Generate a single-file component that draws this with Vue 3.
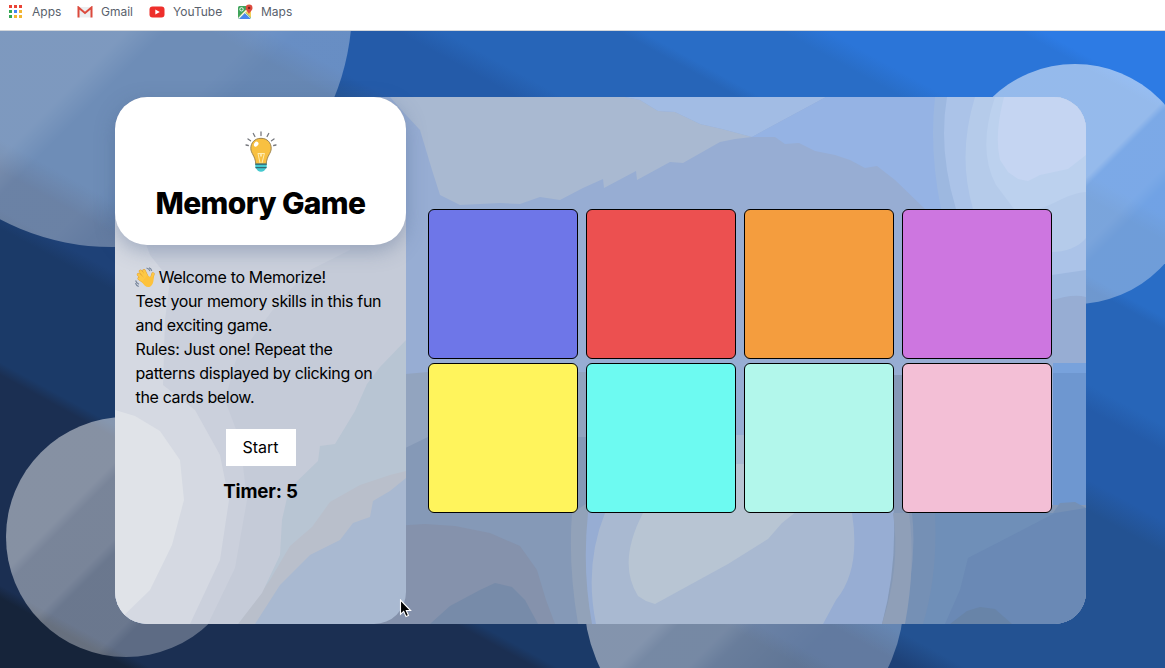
<script setup>
import { ref } from 'vue'

const timer = ref(5)
const cards = ['indigo', 'red', 'orange', 'orchid', 'yellow', 'cyan', 'mint', 'pink']
const dots = ['#ea4335', '#ea4335', '#ea4335', '#34a853', '#4285f4', '#f2b632', '#34a853', '#f2b632', '#f2b632']

// Tonal bands of the frosted panel, painted back to front.
const glassBands = [
  ['#97add3', 'M115 97H1086V624H115z'],
  ['#a9b9d1', 'M390 97H625L640 100 658 111 675 112 700 124 722 129 752 137 735 139 720 142 683 163 670 162 637 180 636 171 604 188 603 179 583 188 560 200 540 197 520 204 500 203 460 205 440 195 432 170 420 130 406 115z'],
  ['#a2bce4', 'M625 97H826L752 137 722 129 700 124 675 112 658 111 640 100z'],
  ['#95b3e4', 'M826 97H960V230H935L925 209 895 180 877 166 865 168 850 160 835 155 815 151 799 143 785 144 775 137 752 137z'],
  ['#9db8e0', 'M935 97Q929 150 941 209L945 300H1052C1064 297 1075 294 1086 297V97z'],
  ['#abc3e8', 'M947 97Q938 150 956 209L960 275H1052L1086 270V97z'],
  ['#b5cbea', 'M975 97Q957 155 973 209L980 252H1052C1064 252 1078 248 1086 238V97z'],
  ['#bcd1ee', 'M995 97Q977 150 996 185L1014 209H1038C1056 204 1068 193 1086 192V97z'],
  ['#c5d5f2', 'M1004 97Q994 135 1000 160L1008 172 1018 179 1028 181 1040 175 1068 169 1086 155V97z'],
  ['#6e97d0', 'M1053 373H1086V515H1053z'],
  ['#78a2dc', 'M1053 363H1086V373H1053z'],
  ['#92a4bf', 'M360 378L428 372H590V520H360z'],
  ['#8599b7', 'M360 470L428 437H590V630H360z'],
  ['#8592ac', 'M360 528L425 524 455 526 490 533 520 546 537 570 546 600 555 624H360z'],
  ['#778ba9', 'M430 624L450 606 480 590 495 583 512 587 525 600 538 624z'],
  ['#8599b7', 'M894 375H902V513H894zM890 505H1053L1086 505V624H880z'],
  ['#7590b5', 'M912 513H1053L1060 503 1075 502 1086 508V624H900Q918 565 912 513z'],
  ['#6a89b5', 'M965 513L1055 513 1086 508V624H930Q948 590 953 555z'],
  ['#6f8fb8', 'M935 513H1055L968 558 960 590 945 624H923Q938 575 935 513z'],
  ['#6884a8', 'M950 624L967 611 980 607 995 609 1012 624z'],
  ['#92a2b9', 'M572 513Q568 565 578 624H592V500z'],
  ['#97add3', 'M588 513Q582 570 592 624H882Q898 565 893 500H590z'],
  ['#8f9fb8', 'M893 513Q901 565 882 624H905Q916 565 909 513z'],
  ['#a9b9d1', 'M605 435H820L852 513Q861 570 836 600L823 624H596Q584 565 605 513z'],
  ['#b8c5d3', 'M643 513Q617 563 638 596L646 601 655 604 728 564 768 539 782 523 797 511V464H650z'],
]

// Tonal bands of the lighter side panel, from its lower right corner to its left edge.
const sideBands = [
  ['#a9b9d1', 'M115 97H406V624H115z'],
  ['#b9bfcb', 'M406 478L390 491 373 501 370 517 353 523 340 540 310 555 280 585 255 624H115V97H406z'],
  ['#b8c5d3', 'M406 471L390 475 360 485 330 502 312 527 290 546 270 580 238 624H115V97H406z'],
  ['#c5cbd8', 'M406 340L380 367 367 384 355 411 335 444 320 446 318 461 289 489 282 520 280 555 262 593 238 624H115V97H406z'],
  ['#cbd0dc', 'M208 624L235 568 247 500 240 440 225 400 236 360 280 300 310 270 350 250V97H115V624z'],
  ['#d5d9e2', 'M190 624L220 560 229 500 220 455 195 410 163 385 165 320 170 280 150 255 130 200H115V624z'],
  ['#e0e3e8', 'M115 624L150 590 172 545 184 500 180 460 160 431 135 416 115 410z'],
]
</script>

<template>
  <div class="page">
    <nav class="bookmarks">
      <a class="bookmark apps">
        <svg width="13" height="13" viewBox="0 0 13 13">
          <rect v-for="(c, i) in dots" :key="i" :x="(i % 3) * 5" :y="Math.floor(i / 3) * 5" width="3" height="3" :fill="c" />
        </svg>
        <span>Apps</span>
      </a>
      <a class="bookmark gmail">
        <svg width="16" height="12" viewBox="0 0 16 12">
          <path d="M1.5 1h13v10.5h-13z" fill="#eceef0" />
          <path d="M1.5 11.5V1.5L8 7l6.500-5.500V11.500" fill="none" stroke="#dc4a3d" stroke-width="2" />
        </svg>
        <span>Gmail</span>
      </a>
      <a class="bookmark youtube">
        <svg width="16" height="12" viewBox="0 0 16 12">
          <rect x=".5" y=".5" width="15" height="11" rx="3" fill="#ee2f2b" />
          <path d="M6.300 3.500v5L10.800 6z" fill="#fff" />
        </svg>
        <span>YouTube</span>
      </a>
      <a class="bookmark maps">
        <svg width="16" height="16" viewBox="0 0 16 16">
          <rect x="0" y="2" width="13" height="13" rx="1.500" fill="#3fa45b" />
          <path d="M0 13.500 11.500 2H13v11.500L7 8z" fill="#f5cf58" />
          <path d="M1 15 7 9l5.800 6z" fill="#4a86ee" />
          <path d="M.5 14.500 12 3" stroke="#f4f6f8" stroke-width="1.300" />
          <path d="M7 8.800 13 14.600" stroke="#f4f6f8" stroke-width="1" />
          <circle cx="3.500" cy="5.300" r="1.700" fill="none" stroke="#fff" stroke-width=".9" />
          <path d="M11 10.500C10.500 7.600 7.700 6.600 7.700 3.900a3.400 3.400 0 0 1 6.800 0c0 2.700-3 3.700-3.500 6.600z" fill="#dd4b3e" />
          <circle cx="11.100" cy="3.900" r="1.200" fill="#7c251f" />
        </svg>
        <span>Maps</span>
      </a>
    </nav>

    <main class="stage">
      <div class="circle circle-a"></div>
      <div class="circle circle-b"></div>
      <div class="circle circle-c"></div>
      <div class="circle circle-d"></div>

      <section class="glass">
        <svg class="bands" width="971" height="527" viewBox="115 97 971 527">
          <path v-for="([fill, d], i) in glassBands" :key="i" :fill="fill" :d="d" />
        </svg>

        <aside class="side">
          <svg class="bands" width="291" height="527" viewBox="115 97 291 527">
            <path v-for="([fill, d], i) in sideBands" :key="i" :fill="fill" :d="d" />
          </svg>

          <header class="brand">
            <svg class="bulb" width="32" height="42" viewBox="0 0 32 42">
              <g stroke="#77797f" stroke-width="1.300" stroke-linecap="round">
                <path d="M16 1v3.500M8.300 2.500l1.600 3M23.700 2.500l-1.600 3M3 8l2.500 1.800M29 8l-2.500 1.800M1 14l2.300.5M31 14l-2.300.5" />
              </g>
              <path d="M16 7.300c-6.200 0-10.200 4.400-10.200 10 0 5.200 4.400 7.300 5 15.700h10.400c.6-8.400 5-10.500 5-15.700 0-5.600-4-10-10.200-10z" fill="#f8c041" stroke="#9c8350" stroke-width="1" />
              <path d="M12.800 22.500h6.800M13 22.500 15 32M19.400 22.500 17 32M15 22.500l1 3 1-3" fill="none" stroke="#fff1bd" stroke-width=".9" />
              <ellipse cx="11.200" cy="13.200" rx="2" ry="2.700" transform="rotate(35 11.200 13.200)" fill="#fff" />
              <path d="M10.300 32.700h11.400v3.800l-2.500 3.200c-1.700 1.500-4.700 1.500-6.400 0l-2.500-3.200z" fill="#45c9cf" />
              <path d="M10.200 33.200h11.600M10.500 36.700h11" stroke="#31525a" stroke-width="1" />
            </svg>
            <h1>Memory Game</h1>
          </header>

          <div class="intro">
            <p>
              <svg class="wave" width="20" height="21" viewBox="0 0 20 21">
                <g fill="none" stroke-linecap="round">
                  <path d="M10.500 16 4.200 11.500M10.500 14 3.500 7.500M11.500 12 5.500 4.300M12.500 11 9 3.800M15.800 14 18 7" stroke="#e0a034" stroke-width="3.300" />
                  <path d="M10.500 16 4.200 11.500M10.500 14 3.500 7.500M11.500 12 5.500 4.300M12.500 11 9 3.800M15.800 14 18 7" stroke="#fdc845" stroke-width="2.500" />
                </g>
                <path d="M8 13.500 12 8.500 16.500 10.500 18.500 9C19 14 18 18 15 19.800 11.500 21 8.500 18 7 15z" fill="#fdc23c" />
                <path d="M11.500 1c1.800.3 3 1.500 3.500 3.200M14 .8c1.500.6 2.400 1.600 2.800 3M.6 13.500c.4 1.700 1.700 3 3.400 3.700M.5 16.200c.5 1.600 1.600 2.700 3.200 3.300" fill="none" stroke="#76849a" stroke-width="1.100" />
              </svg>
              Welcome to Memorize!
            </p>
            <p>Test your memory skills in this fun<br />and exciting game.</p>
            <p>Rules: Just one! Repeat the<br />patterns displayed by clicking on<br />the cards below.</p>
          </div>

          <button class="start">Start</button>
          <h3 class="timer">Timer: {{ timer }}</h3>
        </aside>

        <div class="board">
          <div v-for="card in cards" :key="card" class="card" :class="card"></div>
        </div>
      </section>

      <svg class="pointer" width="14" height="20" viewBox="0 0 14 20">
        <path d="M1.500 1v14.200l3.200-2.800 2.300 5.200 2.500-1.100-2.200-5h4.300z" fill="#000" stroke="#fff" stroke-width="1.100" />
      </svg>
    </main>
  </div>
</template>

<style>
body {
  margin: 0;
  overflow: hidden;
}
</style>

<style scoped>
* {
  box-sizing: border-box;
}

.page {
  display: flex;
  flex-direction: column;
  height: 668px;
  font-family: Inter, "Liberation Sans", sans-serif;
  color: #000;
}

.bookmarks {
  display: flex;
  align-items: center;
  height: 31px;
  padding: 0 0 7px 9px;
  background: #fff;
  border-bottom: 1px solid #d3d6da;
  color: #59616c;
  font-size: 12px;
}

.bookmark {
  display: flex;
  align-items: center;
  height: 24px;
}

.apps { width: 68px; gap: 10px; }
.gmail { width: 72px; gap: 8px; }
.youtube { width: 89px; gap: 8px; }
.maps { gap: 7px; }

.stage {
  position: relative;
  flex: 1;
  padding: 66px 79px 44px 115px;
  overflow: hidden;
  background: linear-gradient(
    to top right,
    #16243a 5.500%, #1b2f52 6.500%,
    #1b2f52 23%, #1b3a68 24%,
    #1b3a68 34.500%, #1e4177 36%,
    #1e4177 39%, #235292 41.500%,
    #235292 59%, #245ba9 61.500%,
    #245ba9 67%, #2765b8 69%,
    #2765b8 76.500%, #296dc6 77.500%,
    #296dc6 83.500%, #2b75d8 85.500%,
    #2b75d8 93.700%, #2d7be4 94.700%
  );
}

.circle {
  position: absolute;
  width: 240px;
  height: 240px;
  border-radius: 50%;
}

.circle-a {
  left: -128px;
  top: -264px;
  width: 480px;
  height: 480px;
  background: linear-gradient(135deg, rgba(255, 255, 255, 0.41) 54%, rgba(255, 255, 255, 0.34) 58%, rgba(255, 255, 255, 0.34) 68%, rgba(255, 255, 255, 0.31) 72%);
}

.circle-b {
  left: 6px;
  top: 386px;
  background: linear-gradient(135deg, rgba(255, 255, 255, 0.47) 32%, rgba(255, 255, 255, 0.41) 35%, rgba(255, 255, 255, 0.41) 48%, rgba(255, 255, 255, 0.35) 51%, rgba(255, 255, 255, 0.35) 68%, rgba(255, 255, 255, 0.29) 71%);
}

.circle-c {
  left: 955px;
  top: 33px;
  background: linear-gradient(135deg, rgba(255, 255, 255, 0.5) 51%, rgba(255, 255, 255, 0.38) 53%, rgba(255, 255, 255, 0.38) 65%, rgba(255, 255, 255, 0.33) 69%);
}

.circle-d {
  left: 584px;
  top: 407px;
  width: 320px;
  height: 320px;
  background: linear-gradient(135deg, rgba(255, 255, 255, 0.46) 41%, rgba(255, 255, 255, 0.4) 44%, rgba(255, 255, 255, 0.4) 52%, rgba(255, 255, 255, 0.34) 56%, rgba(255, 255, 255, 0.3) 68%);
}

.glass {
  position: relative;
  display: flex;
  height: 527px;
  border-radius: 32px;
  overflow: hidden;
}

/* The card's shadow also falls outside the panel, on its left and top. */
.stage::after {
  content: "";
  position: absolute;
  left: 115px;
  top: 66px;
  width: 291px;
  height: 148px;
  border-radius: 32px;
  box-shadow: 0 6px 20px rgba(70, 95, 135, 0.38);
  pointer-events: none;
}

.bands {
  position: absolute;
  left: 0;
  top: 0;
}

.side {
  position: relative;
  display: flex;
  flex-direction: column;
  align-items: center;
  width: 291px;
  border-radius: 32px;
  overflow: hidden;
}

.brand {
  position: relative;
  display: flex;
  flex-direction: column;
  align-items: center;
  width: 291px;
  height: 148px;
  padding-top: 34px;
  border-radius: 32px;
  background: #fff;
}

h1 {
  margin: 8px 0 0;
  font-size: 30px;
  line-height: 44px;
  font-weight: 800;
  letter-spacing: -0.65px;
  white-space: nowrap;
}

.intro {
  position: relative;
  align-self: stretch;
  padding: 20px 20px 0 20.500px;
  font-size: 16px;
  line-height: 24px;
  letter-spacing: -0.34px;
  white-space: nowrap;
}

.intro p {
  margin: 0;
}

.wave {
  margin: 0 -0.5px;
  vertical-align: -5px;
}

.start {
  position: relative;
  width: 70px;
  height: 37px;
  margin-top: 20px;
  padding: 0 0 2px;
  border: 0;
  background: #fff;
  color: #000;
  font-family: inherit;
  font-size: 16px;
}

.timer {
  position: relative;
  margin: 14px 0 0;
  font-size: 18.700px;
  line-height: 24px;
  font-weight: 700;
  letter-spacing: -0.2px;
}

.board {
  position: relative;
  display: grid;
  grid-template-columns: repeat(4, 150px);
  grid-template-rows: repeat(2, 150px);
  gap: 4px 8px;
  padding: 112px 0 0 22px;
}

.card {
  border: 1px solid #000;
  border-radius: 6px;
}

.indigo { background: #6e76e8; }
.red { background: #ec5050; }
.orange { background: #f49d3e; }
.orchid { background: #cd76e0; }
.yellow { background: #fff45c; }
.cyan { background: #6dfaf1; }
.mint { background: #b2f7eb; }
.pink { background: #f3bfd6; }

.pointer {
  position: absolute;
  left: 399px;
  top: 568px;
}
</style>
